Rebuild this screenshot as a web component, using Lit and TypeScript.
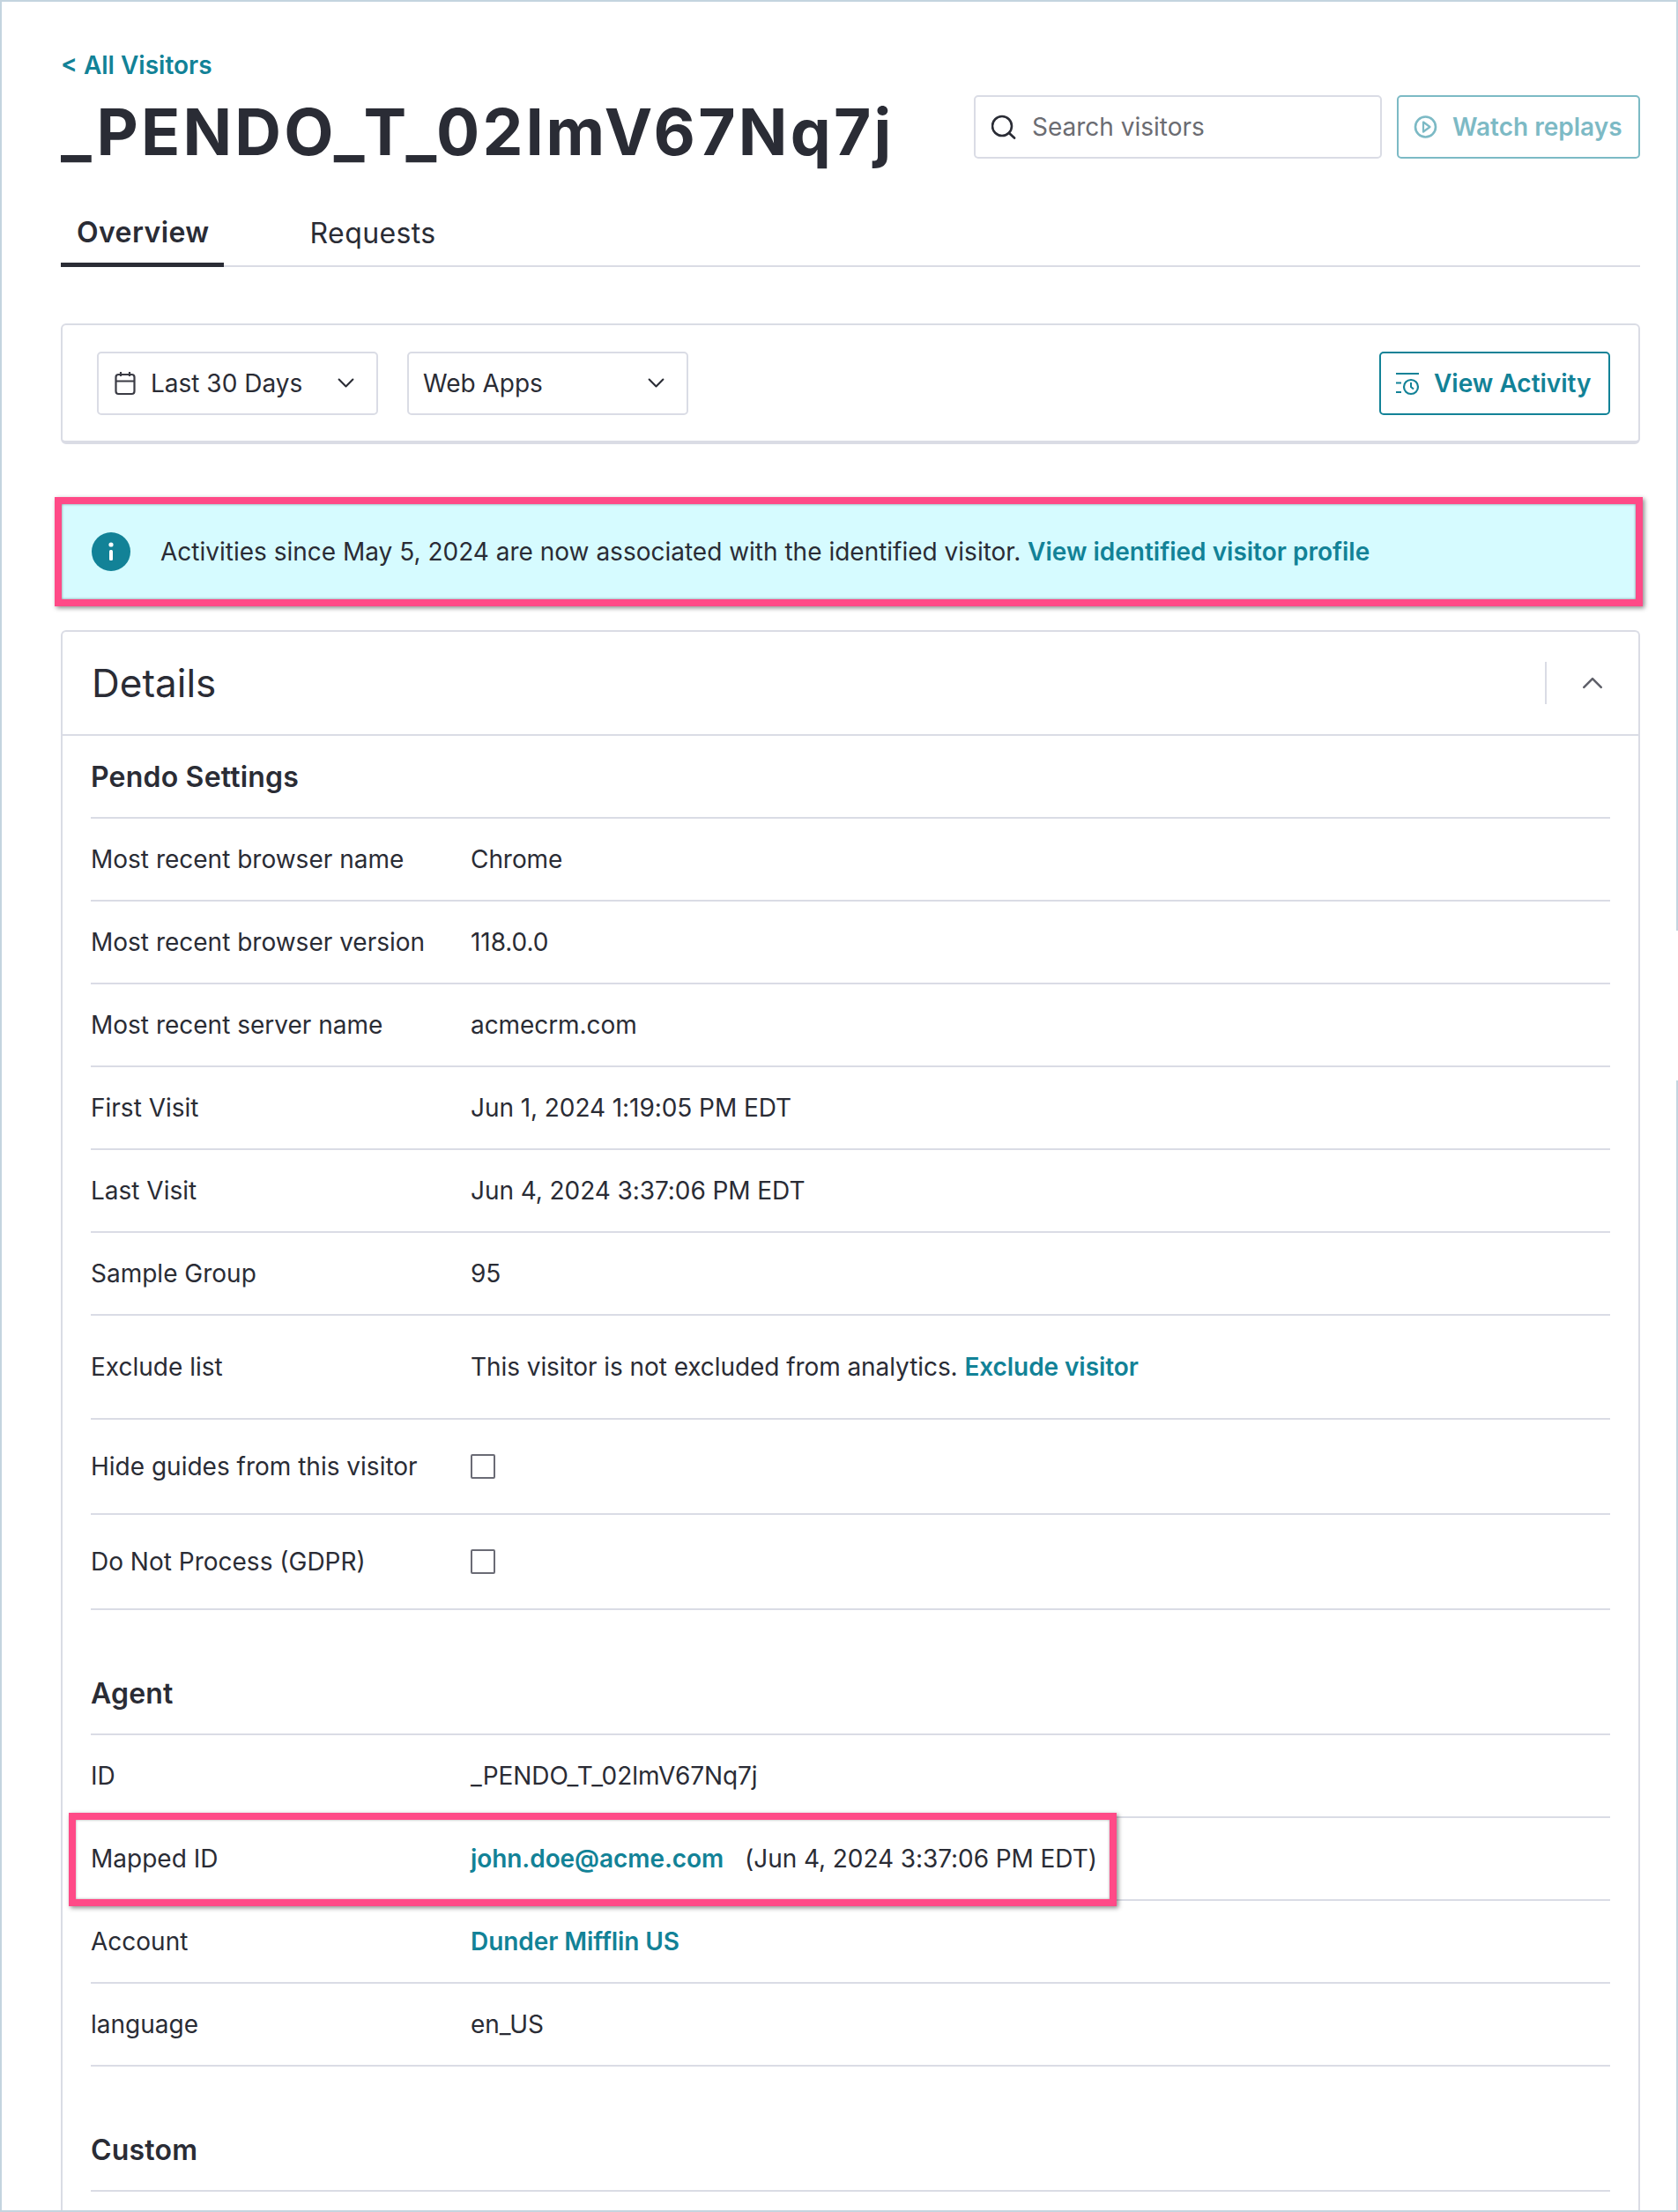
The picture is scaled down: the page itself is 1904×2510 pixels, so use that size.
import { LitElement, html, css, svg } from "lit";
import { customElement } from "lit/decorators.js";

const rows1: [string, unknown][] = [
  ["Most recent browser name", "Chrome"],
  ["Most recent browser version", "118.0.0"],
  ["Most recent server name", "acmecrm.com"],
  ["First Visit", "Jun 1, 2024 1:19:05 PM EDT"],
  ["Last Visit", "Jun 4, 2024 3:37:06 PM EDT"],
  ["Sample Group", "95"],
];

const chevron = svg`<path d="M2 5l6 6 6-6" fill="none" stroke="currentColor" stroke-width="1.6" stroke-linecap="round" stroke-linejoin="round"/>`;

@customElement("app-root")
export class AppRoot extends LitElement {
  static styles = css`
    :host { display: block; width: 1904px; height: 2510px; overflow: hidden; position: relative; font-family: Inter, "Liberation Sans", sans-serif; color: #2a2c35; font-size: 28px; background: #fff; }
    * { box-sizing: border-box; }
    .frame { height: 2510px; border: 2px solid #c4d4df; padding: 0 41px 0 67px; position: relative; }
    .gap { position: absolute; right: -2px; top: 1054px; width: 2px; height: 170px; background: #fff; }
    .top { display: flex; justify-content: space-between; align-items: flex-start; padding-top: 106px; height: 210px; position: relative; }
    .back { position: absolute; left: 0; top: 56px; font-size: 28px; line-height: 32px; font-weight: 600; color: #128297; }
    h1 { margin: 0; font-size: 73px; line-height: 86px; font-weight: 700; letter-spacing: 3.2px; position: absolute; left: 0; top: 105px; white-space: nowrap; }
    .actions { margin-left: auto; display: flex; gap: 17px; }
    .search { width: 463px; height: 72px; border: 2px solid #dadce5; border-radius: 5px; display: flex; align-items: center; padding-left: 18px; gap: 16px; color: #6b6c72; }
    .btn { height: 72px; border: 2px solid #128297; border-radius: 5px; display: flex; align-items: center; color: #128297; font-weight: 600; gap: 16px; }
    .watch { width: 276px; padding-left: 17px; opacity: .55; }
    .tabs { height: 91px; border-bottom: 2px solid #dadce5; display: flex; align-items: stretch; }
    .tab { padding: 16px 16px 0 18px; display: flex; align-items: center; font-size: 32px; margin-right: 80px; letter-spacing: .4px; }
    .tab.on { font-weight: 600; border-bottom: 5px solid #2a2c35; margin-bottom: -2px; }
    .filter { margin-top: 64px; height: 137px; border: 2px solid #dadce5; border-bottom-width: 4px; border-radius: 6px; display: flex; align-items: center; padding: 0 32px 0 39px; gap: 33px; }
    .select { width: 319px; height: 72px; border: 2px solid #dadce5; border-radius: 5px; display: flex; align-items: center; padding: 0 24px 0 16px; justify-content: space-between; }
    .select.date { padding-left: 17px; }
    .select .l { display: flex; align-items: center; gap: 16px; }
    .view { margin-left: auto; width: 262px; padding-left: 16px; }
    .banner { margin: 60px -3px 0 -7px; height: 124px; border: 8px solid #ff4a87; box-shadow: 2px 2px 5px rgba(0,0,0,.45), inset 0 0 3px rgba(0,0,0,.45); background: #d6fbff; display: flex; align-items: center; padding-left: 34px; gap: 34px; }
    a { color: #128297; font-weight: 600; text-decoration: none; }
    .details { margin-top: 27px; border: 2px solid #dadce5; border-bottom: 0; border-radius: 6px 6px 0 0; height: 1793px; }
    .dh { height: 118px; border-bottom: 2px solid #dadce5; display: flex; align-items: center; padding-left: 33px; font-size: 44px; }
    .dh .sep { margin-left: auto; width: 2px; height: 48px; background: #dadce5; }
    .dh .chev { width: 104px; display: flex; justify-content: center; color: #5f6069; }
    .body { padding: 0 32px; }
    h3 { margin: 0; font-size: 32px; font-weight: 600; height: 94px; display: flex; align-items: center; border-bottom: 2px solid #dadce5; letter-spacing: .2px; }
    .row { display: grid; grid-template-columns: 431px 1fr; align-items: center; height: 94px; border-bottom: 2px solid #dadce5; position: relative; }
    .row > div:nth-child(2) { letter-spacing: -.07px; }
    .row.ex { height: 118px; }
    .row.ck { height: 108px; }
    h3.gapped { height: 142px; padding-top: 48px; }
    .box { width: 28px; height: 28px; border: 2px solid #6a6b75; border-radius: 2px; background: #fff; display: block; }
    .hl { position: absolute; left: -25px; top: -6px; width: 1189px; height: 106px; border: 8px solid #ff4a87; box-shadow: 2px 2px 5px rgba(0,0,0,.45), inset 0 0 3px rgba(0,0,0,.35); pointer-events: none; }
    .sp { margin-left: 24px; }
    svg { display: block; flex: none; }
  `;

  row(k: string, v: unknown, cls = "") {
    return html`<div class="row ${cls}"><div>${k}</div><div>${v}</div></div>`;
  }

  render() {
    return html`<div class="frame">
      <span class="gap"></span>
      <div class="top">
        <div class="back">&lt; All Visitors</div>
        <h1>_PENDO_T_02lmV67Nq7j</h1>
        <div class="actions">
          <div class="search">
            <svg width="30" height="30" viewBox="0 0 30 30"><circle cx="12" cy="14" r="11" fill="none" stroke="#2a2c35" stroke-width="2.6"/><path d="M20 22l6 5.5" stroke="#2a2c35" stroke-width="2.8" stroke-linecap="round"/></svg>
            <span>Search visitors</span>
          </div>
          <div class="btn watch">
            <svg width="28" height="28" viewBox="0 0 28 28"><circle cx="13.5" cy="14" r="11.5" fill="none" stroke="currentColor" stroke-width="2.6"/><path d="M11 8.5l7.5 5.5-7.5 5.5z" fill="none" stroke="currentColor" stroke-width="2.2" stroke-linejoin="round"/></svg>
            <span>Watch replays</span>
          </div>
        </div>
      </div>
      <div class="tabs"><div class="tab on">Overview</div><div class="tab">Requests</div></div>
      <div class="filter">
        <div class="select date"><div class="l"><svg width="26" height="28" viewBox="0 0 26 28"><rect x="2.5" y="4" width="21" height="22" rx="3" fill="none" stroke="#3a3b44" stroke-width="2.2"/><path d="M2.5 11.5h21M8 1v5M18 1v5" stroke="#3a3b44" stroke-width="2.2" fill="none"/></svg><span>Last 30 Days</span></div><svg width="21" height="21" viewBox="0 0 16 16">${chevron}</svg></div>
        <div class="select"><span>Web Apps</span><svg width="21" height="21" viewBox="0 0 16 16">${chevron}</svg></div>
        <div class="btn view">
          <svg width="28" height="28" viewBox="0 0 28 28"><path d="M1 3h26M1 13.5h6M1 24h6" stroke="currentColor" stroke-width="2.2" fill="none"/><circle cx="18" cy="18" r="8" fill="none" stroke="currentColor" stroke-width="2.2"/><path d="M18 13v5l3 2.5" fill="none" stroke="currentColor" stroke-width="2"/></svg>
          <span>View Activity</span>
        </div>
      </div>
      <div class="banner">
        <svg width="44" height="44" viewBox="0 0 44 44"><circle cx="22" cy="22" r="22" fill="#128297"/><circle cx="22" cy="14" r="2.6" fill="#fff"/><rect x="20" y="20" width="4" height="12" rx="1.5" fill="#fff"/></svg>
        <span>Activities since May 5, 2024 are now associated with the identified visitor. <a>View identified visitor profile</a></span>
      </div>
      <div class="details">
        <div class="dh"><span>Details</span><span class="sep"></span><span class="chev"><svg width="26" height="26" viewBox="0 0 16 16" style="transform:scaleY(-1)">${chevron}</svg></span></div>
        <div class="body">
          <h3>Pendo Settings</h3>
          ${rows1.map(([k, v]) => this.row(k, v))}
          ${this.row("Exclude list", html`This visitor is not excluded from analytics. <a>Exclude visitor</a>`, "ex")}
          ${this.row("Hide guides from this visitor", html`<span class="box"></span>`, "ck")}
          ${this.row("Do Not Process (GDPR)", html`<span class="box"></span>`, "ck")}
          <h3 class="gapped">Agent</h3>
          ${this.row("ID", "_PENDO_T_02lmV67Nq7j")}
          <div class="row"><div>Mapped ID</div><div><a>john.doe@acme.com</a><span class="sp">(Jun 4, 2024 3:37:06 PM EDT)</span></div><span class="hl"></span></div>
          ${this.row("Account", html`<a>Dunder Mifflin US</a>`)}
          ${this.row("language", "en_US")}
          <h3 class="gapped">Custom</h3>
        </div>
      </div>
    </div>`;
  }
}
